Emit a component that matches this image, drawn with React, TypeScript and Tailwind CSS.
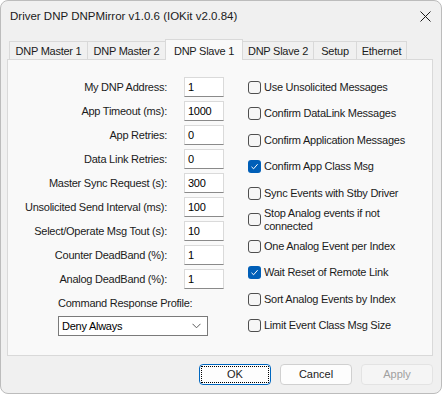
import React from 'react';

const tabs = [
  { label: 'DNP Master 1', w: 'w-[79px]' },
  { label: 'DNP Master 2', w: 'w-[79px]' },
  { label: 'DNP Slave 1', w: 'w-[78px]', active: true },
  { label: 'DNP Slave 2', w: 'w-[72px]' },
  { label: 'Setup', w: 'w-[44px]' },
  { label: 'Ethernet', w: 'w-[51px]' },
];

const fields = [
  { label: 'My DNP Address:', value: '1' },
  { label: 'App Timeout (ms):', value: '1000' },
  { label: 'App Retries:', value: '0' },
  { label: 'Data Link Retries:', value: '0' },
  { label: 'Master Sync Request (s):', value: '300' },
  { label: 'Unsolicited Send Interval (ms):', value: '100' },
  { label: 'Select/Operate Msg Tout (s):', value: '10' },
  { label: 'Counter DeadBand (%):', value: '1' },
  { label: 'Analog DeadBand (%):', value: '1' },
];

const checks: { label: React.ReactNode; checked?: boolean }[] = [
  { label: 'Use Unsolicited Messages' },
  { label: 'Confirm DataLink Messages' },
  { label: 'Confirm Application Messages' },
  { label: 'Confirm App Class Msg', checked: true },
  { label: 'Sync Events with Stby Driver' },
  { label: <>Stop Analog events if not<br />connected</> },
  { label: 'One Analog Event per Index' },
  { label: 'Wait Reset of Remote Link', checked: true },
  { label: 'Sort Analog Events by Index' },
  { label: 'Limit Event Class Msg Size' },
];

function CheckBox({ checked }: { checked?: boolean }) {
  if (checked) {
    return (
      <span className="w-[13px] h-[13px] rounded-[3px] bg-[#005fb8] flex items-center justify-center shrink-0">
        <svg width="9" height="9" viewBox="0 0 9 9">
          <path d="M1.5 4.8 L3.6 6.8 L7.6 2.2" fill="none" stroke="#ffffff" strokeWidth="1" />
        </svg>
      </span>
    );
  }
  return <span className="w-[13px] h-[13px] rounded-[3px] border border-[#4f4f4f] bg-[#f6f6f6] shrink-0" />;
}

export default function App() {
  return (
    <div
      className="w-[442px] h-[394px] bg-[#f0f0f0] border border-[#bcbcbc] rounded-[8px] flex flex-col overflow-hidden text-[#1b1b1b]"
      style={{ fontFamily: '"Liberation Sans", Arial, sans-serif' }}
    >
      {/* title bar */}
      <div className="h-[30px] shrink-0 flex items-center justify-between pl-[9px] pr-[9px]">
        <span className="text-[11.5px] pt-[1px]">Driver DNP DNPMirror v1.0.6 (IOKit v2.0.84)</span>
        <svg width="11" height="11" viewBox="0 0 11 11" className="mr-[1px]">
          <path d="M0.5 0.5 L10.5 10.5 M10.5 0.5 L0.5 10.5" stroke="#1b1b1b" strokeWidth="1" />
        </svg>
      </div>

      {/* tabs */}
      <div className="h-[28px] shrink-0 flex items-end pl-[8px] text-[11px] tracking-[-0.25px]">
        {tabs.map((t) =>
          t.active ? (
            <div
              key={t.label}
              className={`${t.w} -ml-px h-[21px] -mb-px relative z-10 bg-[#f9f9f9] border border-b-0 border-[#d9d9d9] flex items-start justify-center pt-[3px]`}
            >
              {t.label}
            </div>
          ) : (
            <div
              key={t.label}
              className={`${t.w} -ml-px first:ml-0 h-[18px] bg-[#f0f0f0] border border-b-0 border-[#d9d9d9] flex items-center justify-center pt-[1px]`}
            >
              {t.label}
            </div>
          )
        )}
      </div>

      {/* panel */}
      <div className="ml-[6px] mr-[8px] h-[297px] shrink-0 bg-[#f9f9f9] border border-[#d9d9d9] flex text-[11px] tracking-[-0.25px]">
        <div className="w-[216px] shrink-0 pt-[17px] flex flex-col">
          <div className="grid grid-cols-[159px_40px] gap-x-[17px] gap-y-[4px]">
            {fields.map((f) => (
              <React.Fragment key={f.label}>
                <div className="h-[20px] flex items-center justify-end">{f.label}</div>
                <div className="h-[20px] bg-white border border-[#dadada] border-b-[#8a8a8a] flex items-center px-[3px] text-black">
                  {f.value}
                </div>
              </React.Fragment>
            ))}
          </div>
          <div className="pl-[50px] mt-[7px]">
            <div className="h-[14px] leading-[14px]">Command Response Profile:</div>
            <div className="mt-[6px] w-[150px] h-[20px] bg-white border border-[#7a7a7a] flex items-center justify-between pl-[3px] pr-[6px] text-black">
              <span>Deny Always</span>
              <svg width="9" height="6" viewBox="0 0 9 6">
                <path d="M0.5 0.8 L4.5 4.8 L8.5 0.8" fill="none" stroke="#5a5a5a" strokeWidth="1" />
              </svg>
            </div>
          </div>
        </div>

        <div className="ml-[24px] pt-[14px] flex flex-col">
          {checks.map((c, i) => (
            <div key={i} className="h-[26.5px] flex items-center gap-[3px]">
              <CheckBox checked={c.checked} />
              <span className="leading-[13px]">{c.label}</span>
            </div>
          ))}
        </div>
      </div>

      {/* buttons */}
      <div className="flex justify-end gap-[9px] pr-[8px] pt-[8px] text-[11px]">
        <div className="w-[72px] h-[21px] rounded-[4px] border border-[#0067c0] bg-[#fdfdfd] p-[1px]">
          <div className="w-full h-full border border-dotted border-black flex items-center justify-center">OK</div>
        </div>
        <div className="w-[72px] h-[21px] rounded-[4px] border border-[#d0d0d0] bg-[#fdfdfd] flex items-center justify-center">
          Cancel
        </div>
        <div className="w-[72px] h-[21px] rounded-[4px] border border-[#e3e3e3] bg-[#f5f5f5] text-[#a0a0a0] flex items-center justify-center">
          Apply
        </div>
      </div>
    </div>
  );
}
